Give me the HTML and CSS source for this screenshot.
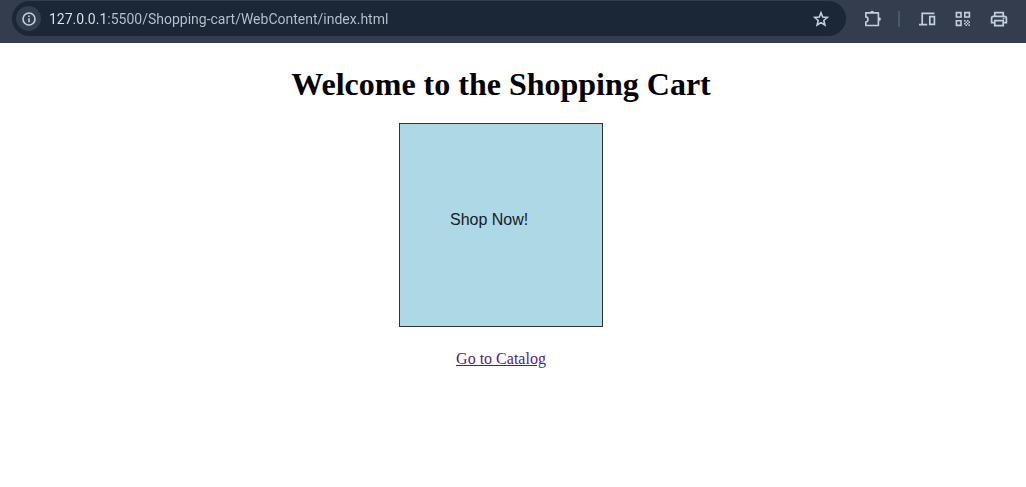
FILE: index.html
```html
<!DOCTYPE html>
<html lang="en">
<head>
<meta charset="utf-8">
<meta name="viewport" content="width=device-width, initial-scale=1">
<title>Shopping Cart</title>
<link rel="stylesheet" href="styles.css">
</head>
<body>
<header class="toolbar">
  <div class="omnibox">
    <button class="site-info" type="button" aria-label="View site information">
      <svg width="14" height="14" viewBox="0 0 14 14" fill="none" stroke="currentColor" stroke-width="1.6"><circle cx="7" cy="7" r="6"/><path d="M7 6.2v4M7 3.6v1.5"/></svg>
    </button>
    <input class="address" type="text" aria-label="Address" spellcheck="false" value="127.0.0.1:5500/Shopping-cart/WebContent/index.html">
    <button class="tool" type="button" aria-label="Bookmark this page">
      <svg width="18" height="18" viewBox="0 0 18 18" fill="none" stroke="currentColor" stroke-width="1.6"><path d="M9 2.8l1.7 4.3 4.6.4-3.5 3 1.1 4.5L9 12.6 5.1 15l1.1-4.5-3.5-3 4.6-.4z"/></svg>
    </button>
  </div>
  <nav class="actions" aria-label="Browser tools">
    <button class="tool" type="button" aria-label="Extensions">
      <svg width="18" height="18" viewBox="0 0 18 18" fill="none" stroke="currentColor" stroke-width="1.6" stroke-linejoin="round"><path d="M1.8 2.9h12.6v12.6H1.8v-3.4c1.4-.2 2.2-1.2 2.2-2.6S3.200 7.100 1.800 6.900z"/><path fill="currentColor" stroke="none" d="M6.200 2.600a1.900 1.900 0 0 1 3.800 0zM15 7.200a1.900 1.900 0 0 1 0 3.800z"/></svg>
    </button>
    <span class="divider"></span>
    <button class="tool" type="button" aria-label="Send to your devices">
      <svg width="18" height="18" viewBox="0 0 18 18" fill="none" stroke="currentColor" stroke-width="1.700"><path d="M16.400 3.400H4.200v10.400M1 14.600h8.200M11.800 6.600h4.600v7.800h-4.600z"/></svg>
    </button>
    <button class="tool" type="button" aria-label="Create QR code">
      <svg width="18" height="18" viewBox="0 0 18 18" fill="none" stroke="currentColor" stroke-width="1.600"><path d="M2.400 2.600H7V7H2.400zM10.800 2.600h4.600V7h-4.600zM2.400 10.800H7v4.600H2.400z"/><path fill="currentColor" stroke="none" d="M10 10h1.500v1.500H10zM13 10h1.500v1.500H13zM11.500 11.500H13V13h-1.500zM14.500 11.500H16V13h-1.500zM10 13h1.500v1.500H10zM13 13h1.500v1.500H13zM11.500 14.500H13V16h-1.500zM14.500 14.500H16V16h-1.500z"/></svg>
    </button>
    <button class="tool" type="button" aria-label="Print">
      <svg width="18" height="18" viewBox="0 0 18 18" fill="none" stroke="currentColor" stroke-width="1.700"><path d="M4.800 6V2.700h8.400V6M4.800 12.600H1.600V8.200Q1.600 6.300 3.500 6.300h11q1.900 0 1.900 1.900v4.400h-3.200M4.800 10.600h8.400v5H4.800z"/><path d="M12.800 8.500h1.600"/></svg>
    </button>
  </nav>
</header>
<main class="page">
  <h1 class="title">Welcome to the Shopping Cart</h1>
  <div class="banner">Shop Now!</div>
  <a class="catalog" href="#catalog">Go to Catalog</a>
</main>
</body>
</html>
```
FILE: styles.css
```css
* {
  box-sizing: border-box;
}

body {
  margin: 0;
  background: #fff;
  color: #000;
  font-family: "Liberation Serif", "Times New Roman", serif;
}

.toolbar {
  display: flex;
  align-items: center;
  gap: 18px;
  padding: 1px 18px 7px 12px;
  background: #333d4d;
  color: #c3cee0;
}

.omnibox {
  display: flex;
  flex: 1;
  align-items: center;
  gap: 8px;
  height: 35px;
  padding: 0 16px 0 4px;
  border-radius: 18px;
  background: #1b2636;
}

.site-info,
.tool {
  display: flex;
  align-items: center;
  justify-content: center;
  padding: 0;
  border: 0;
  background: none;
  color: inherit;
}

.site-info {
  width: 25px;
  height: 25px;
  border-radius: 50%;
  background: #333d4d;
}

.address {
  flex: 1;
  min-width: 0;
  padding: 0;
  border: 0;
  outline: 0;
  background: linear-gradient(90deg, #e1e7f1 56px, #bac3d0 56px) text;
  color: transparent;
  font: 14px/20px Roboto, "Open Sans", sans-serif;
}

.actions {
  display: flex;
  align-items: center;
  gap: 18px;
}

.divider {
  width: 2px;
  height: 16px;
  margin: 0 0 0 -2px;
  background: #4b576a;
}

.page {
  display: flex;
  flex-direction: column;
  align-items: center;
  padding: 22px 24px 22px 0;
}

.title {
  margin: 0 0 20px;
  font-size: 32px;
  line-height: 38px;
}

.banner {
  width: 204px;
  height: 204px;
  padding: 86px 0 0 50px;
  border: 1px solid #333;
  background: #add8e6;
  color: #142128;
  font: 16px/20px "Liberation Sans", Arial, sans-serif;
}

.catalog {
  margin-top: 22px;
  color: #551a8b;
  font-size: 16px;
  line-height: 20px;
}
```
